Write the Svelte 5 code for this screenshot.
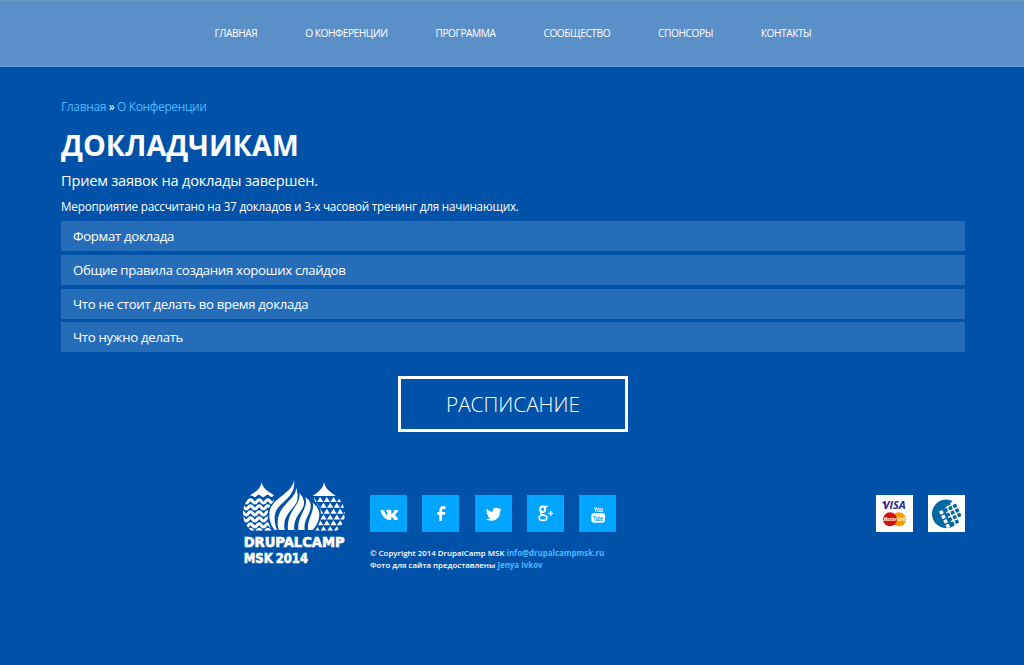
<script>
  const nav = ['Главная', 'О конференции', 'Программа', 'Сообщество', 'Спонсоры', 'Контакты'];
  const sections = [
    'Формат доклада',
    'Общие правила создания хороших слайдов',
    'Что не стоит делать во время доклада',
    'Что нужно делать'
  ];
  const wave = (y) => {
    let d = `M14 ${y}`;
    for (let i = 0; i < 5; i++) d += ` q6.5 -10 13 0 t13 0`;
    return d;
  };
  const waves = [79, 97, 115, 133, 151, 168];
  const triangles = [];
  for (let r = 0; r < 6; r++) {
    for (let c = 0; c < 7; c++) {
      const x = 226 + c * 20 + (r % 2) * 10;
      const y = 66 + r * 17.5;
      triangles.push(`M${x} ${y + 15} l9.5 -15 l9.5 15z`);
    }
  }
  // WebMoney grid: column 0 is white on the globe, the others are blue on white
  const cells = [
    [0, 1], [0, 2], [0, 3], [0, 4],
    [1, 0], [1, 1], [1, 2], [1, 3], [1, 4],
    [2, 0], [2, 1], [2, 2], [2, 3], [2, 4],
    [3, 1], [3, 2], [3, 3]
  ];
</script>

<header>
  <nav>
    {#each nav as item}<a href="#top">{item}</a>{/each}
  </nav>
</header>

<main>
  <div class="crumbs"><a href="#top">Главная</a> » <a href="#top">О Конференции</a></div>
  <h1>Докладчикам</h1>
  <h2>Прием заявок на доклады завершен.</h2>
  <p>Мероприятие рассчитано на 37 докладов и 3-х часовой тренинг для начинающих.</p>
  <div class="accordion">
    {#each sections as s}<div class="item">{s}</div>{/each}
  </div>
  <a class="button" href="#top">РАСПИСАНИЕ</a>
</main>

<footer>
  <svg class="logo" viewBox="15 15 330 258" width="110" height="86">
    <defs>
      <clipPath id="left"><path d="M48 60 H112 C122 72 112 92 104 106 C99 128 106 150 116 167 H49 C15 142 17 90 48 60Z" /></clipPath>
      <clipPath id="right"><path d="M236 60 H299 C340 90 338 140 305 167 H240 C254 145 258 125 252 106 C248 92 236 80 236 60Z" /></clipPath>
    </defs>
    <g fill="#fff">
      <path d="M80 22 C85 44 100 49 117 61 Q111 70 104 63 T91 63 T78 63 T65 63 T54 63 L45 61 C62 49 76 44 80 22Z" />
      <path d="M267 22 C272 44 286 51 303 63 H233 C249 51 263 44 267 22Z" />
      <g clip-path="url(#left)" fill="none" stroke="#fff" stroke-width="9">
        {#each waves as y}<path d={wave(y)} />{/each}
      </g>
      <g clip-path="url(#right)">
        {#each triangles as d}<path {d} />{/each}
      </g>
      <path d="M176 16 C184 56 257 70 258 116 C258 138 249 154 240 168 H113 C102 154 97 136 98 116 C100 70 168 56 176 16Z" fill="#0052a9" />
      <path d="M177 15 C172 58 103 70 103 118 C103 140 110 155 119 165 H126 C110 122 122 100 147 80 C168 62 181 44 177 15Z" />
      <path d="M183 38 C186 78 112 92 131 165 H149 C140 118 180 102 187 76 Q190 52 183 38Z" />
      <path d="M193 54 C200 90 153 107 159 165 H178 C173 120 211 107 207 79 Q203 63 193 54Z" />
      <path d="M211 67 C222 100 186 120 190 165 H209 C204 130 233 115 226 83 Q221 73 211 67Z" />
      <path d="M233 83 C240 110 216 130 219 165 H233 C246 150 253 135 253 116 Q251 95 233 83Z" />
      <g class="wordmark">
        <text x="26" y="215" textLength="303" lengthAdjust="spacingAndGlyphs">DRUPALCAMP</text>
        <text x="26" y="263" textLength="87" lengthAdjust="spacingAndGlyphs">MSK</text>
        <text x="122" y="263" textLength="97" lengthAdjust="spacingAndGlyphs">2014</text>
      </g>
    </g>
  </svg>

  <div class="info">
    <div class="social">
      <a href="#vk" aria-label="VK"><svg viewBox="0 0 111 111"><path d="M31 46 H42 C45 54 48 60 51 61 C54 60 53 50 48 47 C52 43 62 44 64 46 V57 C68 57 72 49 74 45 H84 C84 51 78 55 75 60 C78 64 84 68 84 73 Q80 76 73 74 C69 70 67 66 64 66 V74 C48 78 36 65 31 46Z" /></svg></a>
      <a href="#fb" aria-label="Facebook"><svg viewBox="0 0 111 111"><path d="M70 34 V42 H65 C61 42 60 44 60 48 V51 H70 L69 59 H60 V78 H52 V59 H46 V51 H52 V46 C52 37 57 33 64 33Z" /></svg></a>
      <a href="#tw" aria-label="Twitter"><svg viewBox="0 0 111 111"><path d="M35 41 C40 47 46 50 54 50 C52 42 57 38 63 38 C67 38 69 39 71 41 L78 39 L74 45 L80 44 L75 49 C76 68 61 78 48 77 Q39 77 33 73 Q41 73 46 69 Q39 68 38 62 L42 62 Q34 59 35 51 L39 53 Q32 48 35 41Z" /></svg></a>
      <a href="#gp" aria-label="Google Plus"><svg viewBox="0 0 111 111"><g fill="none" stroke="#fff"><ellipse cx="47" cy="43" rx="7.5" ry="8.5" stroke-width="6" /><path d="M48 34.5 H62" stroke-width="4" /><path d="M44 51 Q39 56 45 59 L54 62" stroke-width="5" /><ellipse cx="48" cy="68" rx="11.5" ry="8" stroke-width="5" /><path d="M64 55 H78 M71 48 V62" stroke-width="4" /></g></svg></a>
      <a href="#yt" aria-label="YouTube"><svg viewBox="0 0 111 111"><text x="44" y="52" class="yt" textLength="28" lengthAdjust="spacingAndGlyphs">You</text><rect x="37" y="54" width="41" height="29" rx="8" /><text x="42" y="77" class="yt tube" textLength="31" lengthAdjust="spacingAndGlyphs">Tube</text></svg></a>
    </div>
    <div class="copy">
      © Copyright 2014 DrupalCamp MSK <a href="#mail">info@drupalcampmsk.ru</a><br />
      Фото для сайта предоставлены <a href="#photo">Jenya Ivkov</a>
    </div>
  </div>

  <div class="pay">
    <svg viewBox="0 0 111 111">
      <text x="21" y="43" class="visa" textLength="68" lengthAdjust="spacingAndGlyphs">VISA</text>
      <path d="M17 21 H28 L32 34Z" fill="#25258b" />
      <circle cx="69" cy="73" r="21" fill="#f90" />
      <circle cx="42" cy="73" r="21" fill="#d01013" />
      <text x="23" y="79" class="mc" textLength="65" lengthAdjust="spacingAndGlyphs">MasterCard</text>
    </svg>
    <svg viewBox="0 0 111 111">
      <path d="M74 18 A43 43 0 1 0 82 90 L74 89 L60 68 L50 40Z" fill="#0068a5" />
      <g transform="rotate(-25 68 56)">
        {#each cells as [c, r]}
          <rect x={39 + c * 15} y={20 + r * 15} width="11" height="11" rx="2" fill={c === 0 ? '#fff' : '#0068a5'} />
        {/each}
      </g>
    </svg>
  </div>
</footer>

<style>
  :global(body) { margin: 0; background: #0052a9; }
  :global(#app) { font-family: 'Open Sans', sans-serif; color: #fff; min-height: 665px; background: #0052a9; }
  a { text-decoration: none; color: #4db8ff; }
  header { height: 67px; box-sizing: border-box; background: #5b8fc8; border-top: 1px solid #6896c6; border-bottom: 1px solid #6a9bd0; }
  nav { display: flex; gap: 48px; padding: 0 0 0 214.5px; line-height: 65px; }
  nav a { color: #fff; font-size: 10.2px; letter-spacing: -0.46px; text-transform: uppercase; white-space: nowrap; }
  main { padding: 31px 59px 0 61px; display: flex; flex-direction: column; }
  .crumbs { font-size: 12px; letter-spacing: -0.37px; line-height: 18px; }
  h1 { margin: 9px 0 0; font-size: 28.7px; line-height: 40px; font-weight: 700; text-transform: uppercase; }
  h2 { margin: 5px 0 0; font-size: 14.6px; letter-spacing: -0.21px; line-height: 20px; font-weight: 400; }
  p { margin: 8px 0 0; font-size: 11.7px; letter-spacing: -0.2px; line-height: 16px; }
  .accordion { display: flex; flex-direction: column; gap: 3.8px; margin-top: 7px; }
  .item { height: 30px; line-height: 30px; padding-left: 12px; background: #266db9; font-size: 13.2px; letter-spacing: -0.3px; }
  .button { align-self: center; margin: 24px 0 0 -1px; width: 230px; height: 56px; box-sizing: border-box; border: 3px solid #fff; color: #fff; text-align: center; font-size: 20.75px; font-weight: 300; line-height: 50px; padding-left: 1px; }
  footer { display: flex; align-items: flex-start; padding: 48px 59px 0 240px; }
  .logo { flex: none; overflow: visible; }
  .wordmark { font: 700 43px 'DejaVu Sans', sans-serif; stroke: #fff; stroke-width: 2; }
  .info { margin: 15px 0 0 20px; }
  .social { display: flex; gap: 15.3px; }
  .social a { width: 37px; height: 37px; background: #00a5ff; }
  .social svg, .pay svg { display: block; width: 37px; height: 37px; fill: #fff; }
  .copy { margin-top: 15px; font-size: 7.9px; line-height: 12px; white-space: nowrap; font-weight: 600; }
  .copy a { font-weight: 700; }
  .yt { font: 700 21px 'Liberation Sans', sans-serif; }
  .tube { fill: #00a5ff; }
  .pay { display: flex; gap: 15px; margin: 15px 0 0 auto; }
  .pay svg { background: #fff; }
  .visa { font: italic 700 30px 'Open Sans', sans-serif; fill: #25258b; }
  .mc { font: italic 700 15px 'Open Sans', sans-serif; fill: #fff; }
</style>
